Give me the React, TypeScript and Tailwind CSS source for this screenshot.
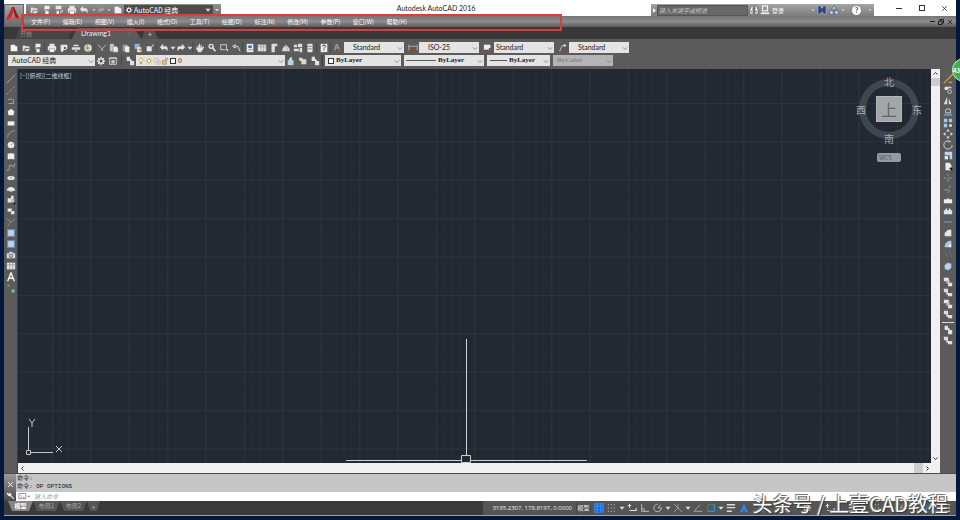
import type { ReactNode } from "react";
import clsx from "clsx";

// 12x12 のツールアイコン
const glyphs: Record<string, ReactNode> = {
  new: <path d="M2 2h5l1 2h2v6H2z" fill="#f2f2f2" />,
  open: <path d="M2 3h3l1 1h4v2H5L3 10H2zM6 7h5l-2 3H4z" fill="#dcdcdc" />,
  save: <path d="M3 1h6v4H3zM4 7h4v4H4zM3 5h1v2H3z" fill="#e8eef2" />,
  saveAs: <path d="M2 1h7v4H2zM3 7h3v4H3zM7 9l3-3 1 1-3 3z" fill="#e8e4dc" />,
  print: (
    <>
      <path d="M3 1h6v3H3zM1 4h10v5H1z" fill="#e6e6e6" />
      <path d="M3 7h6v4H3z" fill="#fff" stroke="#666" strokeWidth=".6" />
    </>
  ),
  preview: (
    <>
      <path d="M2 2h8v5H7l-3 4-2-1z" fill="#e6e6e6" />
      <circle cx="7" cy="6" r="2" fill="#555" stroke="#fff" />
    </>
  ),
  publish: <path d="M3 2h6v2H3zM1 5h10v3H1zM4 9h4l-2 2z" fill="#e0e0e0" />,
  globe: (
    <>
      <circle cx="6" cy="6" r="4.5" fill="#d8dcc8" />
      <path d="M6 2c-2 3-1 6 1 8M3 6h5" stroke="#6e7f52" fill="none" />
    </>
  ),
  cut: <path d="M1 2l5 5M11 2L6 7M5 9l1-2 1 2" stroke="#c8c8c8" fill="none" />,
  copy: (
    <>
      <path d="M1 1h5v9H1z" fill="#c4c4c4" />
      <path d="M5 4h4l2 2v5H5z" fill="#ececec" stroke="#666" strokeWidth=".5" />
    </>
  ),
  paste: (
    <>
      <path d="M2 2h6v8H2z" fill="#9c9c9c" />
      <path d="M5 4h4l1 1v6H5z" fill="#f0f0f0" />
    </>
  ),
  match: (
    <>
      <path d="M2 1h6v6H2z" fill="#8fb4dc" />
      <path d="M5 5h5v6H5z" fill="#f0e8d8" />
      <path d="M7 7l4 3" stroke="#c98a3a" strokeWidth="2" />
    </>
  ),
  blockEdit: (
    <>
      <path d="M2 4h6v6H2z" fill="#e8e8e8" />
      <path d="M6 7l4-6 1 2z" fill="#e0b070" />
    </>
  ),
  undo: <path d="M1 5l4-4v3h3c2 0 3 2 2 6-1-2-2-3-5-3v2z" fill="#e2e2e2" />,
  redo: <path d="M11 5L7 1v3H4c-2 0-3 2-2 6 1-2 2-3 5-3v2z" fill="#e2e2e2" />,
  arrow: <path d="M3 4.500h6L6 8z" fill="#e0e0e0" />,
  hand: <path d="M3 6V3h1v3l1-5h1v5l1-4h1v4l2-2 1 1-3 5-1 1H4L1 6l1-1z" fill="#e2e2e2" />,
  zoom: (
    <>
      <circle cx="5" cy="4" r="2.500" fill="#666" stroke="#e6e6e6" strokeWidth="1.500" />
      <path d="M7 6l3 4" stroke="#e6e6e6" strokeWidth="2" />
    </>
  ),
  zoomWin: (
    <>
      <path d="M2 2h7v6H2z" fill="none" stroke="#ddd" />
      <path d="M7 7h4v4z" fill="#fff" stroke="#222" strokeWidth=".5" />
    </>
  ),
  zoomPrev: <path d="M2 4l3-2v4zM5 4h3l3 6" stroke="#ddd" strokeWidth="1.200" fill="none" />,
  props: (
    <>
      <path d="M2 1h8v10H2z" fill="#e6ecf2" />
      <path d="M4 3h4v3H4z" fill="#326aa6" />
      <path d="M4 8h5" stroke="#777" />
    </>
  ),
  table: (
    <>
      <path d="M1 2h10v8H1z" fill="#e2e2e2" />
      <path d="M1 4.500h10M4.500 2v8M8 2v8" stroke="#888" strokeWidth=".7" />
    </>
  ),
  palette: <path d="M3 1h7v3H7v7H3z" fill="#dcdcdc" />,
  sheet: <path d="M2 6l4-4 4 4 1 4H1zM5 3l3 5" fill="#dedede" stroke="#777" strokeWidth=".7" />,
  markup: <path d="M1 2h4v3H1zM6 1h5v4H6zM1 7h6v3H1zM8 6h3v5H8z" fill="#dedede" />,
  calc: (
    <>
      <path d="M3 1h6v10H3z" fill="#e8e8e8" />
      <path d="M4 4h4M4 7h4" stroke="#666" />
    </>
  ),
  help: (
    <>
      <path d="M2 1h8v10H2z" fill="#ededed" />
      <path d="M4 4c0-2 4-2 4 0 0 1-2 1-2 3M6 8v1" stroke="#333" fill="none" strokeWidth="1.200" />
    </>
  ),
  textStyle: (
    <>
      <path d="M2 9l2-7h1l3 7M3 6h4" stroke="#a8a8a8" fill="none" strokeWidth="1.300" />
      <path d="M7 6h2v5H7z" fill="#9a5a38" />
    </>
  ),
  dimStyle: (
    <>
      <path d="M1 2v7M11 2v7M1 4h10" stroke="#bbb" />
      <path d="M3 5h6v4H3z" fill="#8a4a30" />
    </>
  ),
  tableStyle: (
    <>
      <path d="M1 2h8v6H1z" fill="#ececec" />
      <path d="M7 6h3v5H7z" fill="#8a5238" />
    </>
  ),
  leaderStyle: (
    <>
      <path d="M2 10L5 3h3" stroke="#ccc" fill="none" />
      <circle cx="8" cy="3" r="1.500" fill="#ddd" />
      <path d="M6 6h4v5H6z" fill="#7d4d3a" />
    </>
  ),
  gear: (
    <>
      <path d="M6 1v10M1 6h10M2.500 2.500l7 7M9.500 2.500l-7 7" stroke="#eee" strokeWidth="1.500" />
      <circle cx="6" cy="6" r="2.600" fill="#444" stroke="#eee" strokeWidth="1.600" />
    </>
  ),
  workspace: (
    <>
      <path d="M2 2h8v8H2z" fill="none" stroke="#ddd" />
      <path d="M4 5h4v4H4z" fill="#ccc" />
      <path d="M1 3h10" stroke="#ccc" />
    </>
  ),
  layers: <path d="M2 1h4v5H2zM5 4h3v2H5zM6 6h5v5H6z" fill="#e0e4e8" />,
  layerPrev: (
    <>
      <path d="M2 5h7v6H2z" fill="#b8d2e8" />
      <path d="M4 5V3l3-2v4" fill="#eee" />
    </>
  ),
  layerState: <path d="M1 2h4l1 2h4v6H4V6H2z" fill="#e0d8cc" />,
  bulb: (
    <>
      <circle cx="6" cy="4.500" r="3" fill="#fff4a8" stroke="#c0a030" />
      <path d="M5 8h2v3H5z" fill="#7a7a6a" />
    </>
  ),
  sun: (
    <>
      <path d="M6 0v12M0 6h12M2 2l8 8M10 2l-8 8" stroke="#c9a94a" strokeWidth=".8" />
      <circle cx="6" cy="6" r="2.500" fill="#fffbe0" stroke="#b89a44" />
    </>
  ),
  vpFreeze: <path d="M2 2h6v6H2zM6 6h5v5H6z" fill="#ddd" stroke="#bbb" />,
  lock: (
    <>
      <path d="M2 5h6v6H2z" fill="#d9c27a" stroke="#8f7a3a" strokeWidth=".7" />
      <path d="M7 5V2h3v3" fill="none" stroke="#777" />
    </>
  ),
  line: <path d="M1 11L11 1" stroke="#b0b0b0" />,
  xline: <path d="M1 11L11 1" stroke="#a8a8a8" strokeDasharray="3 2" />,
  pline: <path d="M3 9h6V5a2 2 0 0 0-3-1H2" fill="none" stroke="#9fb4c4" />,
  polygon: <path d="M6 2l4 3-1 5H3L2 5z" fill="#eef1f3" />,
  rect: <path d="M2 4h8v5H2z" fill="#eef1f3" />,
  arc: <path d="M2 10c0-4 3-7 8-8" fill="none" stroke="#aaa" />,
  circle: (
    <>
      <circle cx="6" cy="6" r="4" fill="#e6eaec" />
      <path d="M6 6l2-2" stroke="#888" />
    </>
  ),
  cloud: <path d="M2 3h3l1-1 1 1h3v7H7l-1-1-1 1H2z" fill="#eef1f3" />,
  spline: <path d="M1 10c4 1 3-3 3-5s3-1 4 0 0 3 3-3" fill="none" stroke="#bcc6cc" />,
  ellipse: (
    <>
      <ellipse cx="6" cy="6" rx="4.500" ry="2.500" fill="#dfe9f1" />
      <circle cx="6" cy="6" r="1" fill="#5b8fb9" />
    </>
  ),
  ellipseArc: <path d="M1 8c0-6 10-6 10 0H8v1H4V8z" fill="#e3eaef" />,
  insert: (
    <>
      <path d="M2 4h4v5H2zM6 1h3v4H6z" fill="#dfe8ee" />
      <path d="M6 5h4v4H6z" fill="#a8c4d8" />
      <path d="M11 8v3H8z" fill="#111" />
    </>
  ),
  block: <path d="M2 3h5v4H2zM6 6h4v4H6z" fill="#eef1f3" stroke="#888" strokeWidth=".4" />,
  point: <path d="M1 2l5 4 5-4M6 6l-4 5" stroke="#9a9a9a" fill="none" />,
  hatch: (
    <>
      <path d="M2 2h8v8H2z" fill="#b9d2f0" />
      <path d="M1 2h10M1 10h10M2 1v10M10 1v10" stroke="#6f93bd" strokeWidth=".8" />
    </>
  ),
  region: (
    <>
      <path d="M1 4h10v6H1zM4 2h4v2H4z" fill="#cfdfee" />
      <circle cx="6" cy="7" r="2" fill="none" stroke="#446" />
    </>
  ),
  mtext: <path d="M2 11L6 1l4 10M3.500 7.500h5" stroke="#f4f4f4" strokeWidth="1.700" fill="none" />,
  addSel: (
    <>
      <path d="M2 2l3 3M7 8h3v3H7z" stroke="#58a858" fill="#9fc4dd" />
      <circle cx="3" cy="3" r="1.300" fill="#57b657" />
    </>
  ),
  erase: (
    <>
      <path d="M1 11L12 0" stroke="#e09a3c" strokeWidth="1.500" />
      <path d="M7 10h4" stroke="#ccc" />
    </>
  ),
  copyObj: (
    <>
      <circle cx="4" cy="4" r="2.200" fill="#e2e8ec" />
      <circle cx="8" cy="8" r="2.200" fill="none" stroke="#cdd9e2" />
      <path d="M6 2h4v2H6z" fill="#cfd8de" />
    </>
  ),
  mirror: <path d="M5 1v9H1zM7 3v7h3z" fill="#dfe4e8" />,
  offset: <path d="M1 9.500h10M3 7V5a3 3 0 0 1 6 0v2H3" fill="none" stroke="#9fc1da" strokeWidth="1.300" />,
  array: (
    <>
      <path d="M1 1h4v4H1zM7 1h4v4H7zM1 7h4v4H1z" fill="#a5c8ea" />
      <path d="M7 7h4v4H7z" fill="#dbe9f6" stroke="#111" strokeWidth=".5" />
    </>
  ),
  move: <path d="M6 0l2 3H4zM6 12l2-3H4zM0 6l3-2v4zM12 6L9 4v4z" fill="#dbe5ec" />,
  rotate: <path d="M9 2a5 5 0 1 0 2 4M9 2H6" fill="none" stroke="#d0d0d0" strokeWidth="1.200" />,
  scale: (
    <>
      <path d="M2 1h9v9H8V5H2z" fill="#b9d4ef" />
      <path d="M2 6h4v4H2z" fill="#f0f0f0" />
    </>
  ),
  stretch: (
    <>
      <path d="M3 1h5l2 3v6H3z" fill="#e8edf1" />
      <path d="M7 7h4v4z" fill="#111" />
    </>
  ),
  trim: <path d="M1 6h3M6 6h5M6 1v3M6 7v4" stroke="#7ea3bd" />,
  extend: <path d="M1 7h6M8 2v3M8 7L6 11" stroke="#8daabf" />,
  breakPt: <path d="M1 5h4l1-2 1 2h4v5H1z" fill="#eceff1" />,
  breakObj: <path d="M1 5h2V3h2v2h2V3h2v2h2v5H1z" fill="#d7e7f4" />,
  join: <path d="M1 6h10" stroke="#6fa4cc" strokeWidth="1.200" />,
  chamfer: <path d="M2 10V6l4-4h4v8z" fill="#e0e6ea" />,
  fillet: (
    <>
      <path d="M2 10c0-5 3-8 8-8v3C8 6 7 8 7 10z" fill="#a8cbe8" />
      <path d="M7 10c0-3 1-4 3-5v5z" fill="#fff" />
    </>
  ),
  blend: <path d="M2 3c4 0 1 5 4 5M7 2c3 1 2 5 4 7" stroke="#5a7d94" fill="none" />,
  explode: <path d="M2 5l3-3 5 1v5l-3 3-5-1z" fill="#b7d3ea" stroke="#678" strokeWidth=".5" />,
  orderA: (
    <>
      <path d="M1 1h6v4H1zM6 7h5v4H6z" fill="#e6e6e6" />
      <path d="M4 4h4v4H4z" fill="#bdbdbd" />
    </>
  ),
  orderB: <path d="M1 1h5v4H1zM6 6h5v4H6zM4 5h2v3H4z" fill="#dedede" />,
  snapGrid: <path d="M1 1h10v10H1zM1 4h10M1 8h10M4 1v10M8 1v10" fill="#1f5fc0" stroke="#2f8cff" strokeWidth="1.300" />,
  dots: <path d="M1 2h10M1 6h10M1 10h10" stroke="#aaa" strokeDasharray="1.500 2" strokeWidth="1.300" />,
  infer: <path d="M3 1v5M1 3h4M3 9h8V6" stroke="#e0e0e0" fill="none" strokeWidth="1.300" />,
  ortho: <path d="M2 1v9h9M5 10V7H2" stroke="#c8c8c8" fill="none" />,
  polar: <path d="M10 6a4.500 4.500 0 1 1-4-4.500M6 6h5M6 6l3-4" stroke="#c8c8c8" fill="none" />,
  iso: <path d="M1 1l10 10M6 1v5M1 11l5-5" stroke="#a8a8a8" fill="none" />,
  track: <path d="M1 10h10M2 9l7-7" stroke="#b8b8b8" fill="none" />,
  osnap: (
    <>
      <path d="M2 2h8v8H2z" stroke="#3f8f6a" fill="none" />
      <path d="M10 1v8M2 10h8" stroke="#2c8ee8" fill="none" strokeWidth="1.400" />
    </>
  ),
  weight: <path d="M1 2h10M1 5.500h10M1 10h6" stroke="#dcdcdc" strokeWidth="1.700" />,
  annot: <path d="M6 0l2 6 3 5H8L6 8l-2 3H1l3-5z" fill="#2d8bf0" />,
  burger: <path d="M1 2h10M1 6h10M1 10h10" stroke="#ddd" strokeWidth="1.300" />,
  binocular: (
    <>
      <path d="M1 11V6l2-5h2v10zM7 11V1h2l2 5v5zM5 4h2v3H5z" fill="#f2f2f2" stroke="#444" strokeWidth=".7" />
      <path d="M2 8h2M8 8h2" stroke="#444" />
    </>
  ),
  user: (
    <>
      <path d="M3 1h6v6H3z" fill="none" stroke="#f2f2f2" strokeWidth="1.500" />
      <path d="M1 10h10" stroke="#f2f2f2" strokeWidth="2" />
    </>
  ),
  exchange: <path d="M1 1h3l2 3 2-3h3v10H8L6 8l-2 3H1z" fill="#33467e" stroke="#eee" strokeWidth=".5" />,
  a360: <path d="M6 1l3 4H3zM1 7h4v4H1zM7 7h4v4H7z" fill="#dde4f6" stroke="#3a4b80" strokeWidth=".8" />,
  wrench: <path d="M2 2l2 2 1-2 2 2v2l4 4-1 1-4-4H4L1 4z" fill="#f4f4f4" />,
  close: <path d="M2 2l8 8M10 2l-8 8" stroke="currentColor" strokeWidth="1.500" />,
};

function Icon({ name, className }: { name: string; className?: string }) {
  return (
    <svg viewBox="0 0 12 12" className={clsx("shrink-0", className ?? "size-[10px]")}>
      {glyphs[name]}
    </svg>
  );
}

function ToolButton({ name, className }: { name: string; className?: string }) {
  return (
    <button aria-label={name} className={clsx("flex shrink-0 items-center justify-center", className ?? "h-[11px] w-3")}>
      <Icon name={name} />
    </button>
  );
}

interface ComboProps {
  label: string;
  value: string;
  className: string;
  selectClass?: string;
  disabled?: boolean;
  children?: ReactNode;
}

function Combo({ label, value, className, selectClass, disabled, children }: ComboProps) {
  return (
    <label
      className={clsx(
        "flex h-[11px] shrink-0 items-center",
        disabled ? "bg-[#b4b4b4] text-[#858585]" : "bg-[#e4e4e4] text-[#222]",
        className,
      )}
    >
      {children}
      <select
        aria-label={label}
        disabled={disabled}
        className={clsx("h-full min-w-0 flex-1 appearance-none leading-[11px] opacity-100 outline-none", selectClass)}
      >
        <option>{value}</option>
      </select>
      <svg viewBox="0 0 8 8" className="mr-px size-[6px] shrink-0">
        <path d="M1 3l3 3 3-3" fill="none" stroke="#777" />
      </svg>
    </label>
  );
}

const menus = [
  "文件(F)", "编辑(E)", "视图(V)", "插入(I)", "格式(O)", "工具(T)",
  "绘图(D)", "标注(N)", "修改(M)", "参数(P)", "窗口(W)", "帮助(H)",
];

const quickTools = ["open", "save", "saveAs", "print", "undo"];

const standardGroups = [
  ["new", "open", "save"],
  ["print", "preview", "publish", "globe"],
  ["cut", "copy", "paste", "match", "blockEdit"],
  ["undo", "arrow", "redo", "arrow"],
  ["hand", "zoom", "zoomWin", "zoomPrev"],
  ["props", "table", "palette", "sheet", "markup", "calc"],
  ["help"],
];

const styleCombos = [
  { icon: "textStyle", label: "文字样式", value: "Standard", indent: "pl-[9px]" },
  { icon: "dimStyle", label: "标注样式", value: "ISO-25", indent: "pl-[9px]" },
  { icon: "tableStyle", label: "表格样式", value: "Standard", indent: "pl-[2px]" },
  { icon: "leaderStyle", label: "多重引线样式", value: "Standard", indent: "pl-[9px]" },
];

const drawTools = [
  "line", "xline", "pline", "polygon", "rect", "arc", "circle", "cloud", "spline", "ellipse",
  "ellipseArc", "insert", "block", "point", "hatch", "hatch", "region", "table", "mtext", "addSel",
];

const modifyTools = [
  "erase", "copyObj", "mirror", "offset", "array", "move", "rotate", "scale", "stretch",
  "trim", "extend", "breakPt", "breakObj", "join", "chamfer", "fillet", "blend", "explode",
];

const statusTools = [
  "snapGrid", "dots", "arrow", "infer", "ortho", "polar", "arrow", "iso", "arrow", "track", "osnap", "arrow",
  "weight", "annot",
];

function TitleBar() {
  return (
    <div className="flex h-4 items-end bg-white">
      <div className="ml-[2px] flex h-3 w-[195px] shrink-0 items-center bg-linear-to-b from-[#909090] to-[#6c6c6c]">
        <div className="flex w-[98px] items-center justify-between pl-[2px]">
          {quickTools.map((name) => (
            <ToolButton key={name} name={name} />
          ))}
          <Icon name="arrow" className="size-[6px]" />
          <Icon name="redo" className="size-2 opacity-40" />
          <Icon name="arrow" className="size-[6px]" />
          <ToolButton name="new" />
        </div>
        <label className="flex h-[11px] flex-1 items-center bg-[#4c4c4c] pl-px text-white">
          <Icon name="gear" className="size-2" />
          <select aria-label="工作空间" className="h-full min-w-0 flex-1 appearance-none pl-px leading-[11px]">
            <option>AutoCAD 经典</option>
          </select>
          <Icon name="arrow" />
        </label>
        <button aria-label="自定义" className="flex w-2 justify-center">
          <Icon name="arrow" className="size-2" />
        </button>
      </div>
      <h1 className="flex h-4 flex-1 items-center justify-center font-['Lato','Noto_Sans_CJK_SC',sans-serif] text-[7px] text-[#222]">
        Autodesk AutoCAD 2016
      </h1>
      <div className="flex h-3 w-[223px] shrink-0 items-center bg-linear-to-b from-[#a4a4a4] to-[#7c7c7c]">
        <span className="flex w-[6px] justify-center">
          <svg viewBox="0 0 4 6" className="h-[5px] w-[3px]">
            <path d="M0 0l4 3-4 3z" fill="#fff" />
          </svg>
        </span>
        <input
          aria-label="搜索"
          placeholder="键入关键字或短语"
          className="h-[11px] w-[91px] border border-[#555] bg-[#686868] px-px text-[6px] leading-[9px] italic placeholder:text-[#c4c4c4]"
        />
        <ToolButton name="binocular" />
        <button className="flex items-center gap-[2px] text-[6px] text-white">
          <Icon name="user" />
          登录
        </button>
        <span className="flex-1" />
        <Icon name="arrow" className="size-[6px]" />
        <ToolButton name="exchange" />
        <ToolButton name="a360" />
        <Icon name="arrow" className="size-[6px]" />
        <button className="mx-[6px] flex size-[9px] items-center justify-center rounded-full bg-white text-[7px] leading-none font-bold text-[#2c4e96]">
          ?
        </button>
        <Icon name="arrow" className="mr-px size-[6px]" />
      </div>
      <div className="flex h-4 w-[82px] shrink-0 items-center justify-between pr-2 pl-[22px]">
        <button aria-label="最小化" className="flex">
          <svg viewBox="0 0 6 6" className="size-[6px]">
            <path d="M0 3.500h6" stroke="#333" />
          </svg>
        </button>
        <button aria-label="最大化" className="size-[6px] border border-[#333]" />
        <button aria-label="关闭" className="text-[#333]">
          <Icon name="close" className="size-[7px]" />
        </button>
      </div>
    </div>
  );
}

function MenuBar() {
  return (
    <nav className="flex h-[11px] items-center justify-between bg-linear-to-b from-[#757575] via-[#8c8c8c] to-[#5c5c5c] pl-[7px] text-[6px] text-white">
      <div className="flex w-[376px] shrink-0 justify-between">
        {menus.map((menu) => (
          <button key={menu} className="leading-[11px] whitespace-nowrap">
            {menu}
          </button>
        ))}
      </div>
      <div className="flex items-center gap-[3px] pr-[3px] text-[#1c1c1c]">
        <button aria-label="最小化图形" className="h-px w-[5px] bg-[#1c1c1c]" />
        <button aria-label="还原图形" className="flex">
          <svg viewBox="0 0 6 6" className="size-[6px]">
            <path d="M2 2V.5h3.500V4H4M.5 2H4v3.500H.5z" fill="none" stroke="#1c1c1c" />
          </svg>
        </button>
        <button aria-label="关闭图形">
          <Icon name="close" className="size-[6px]" />
        </button>
      </div>
    </nav>
  );
}

function FileTabs() {
  return (
    <div className="flex h-3 items-end bg-[#383838] pl-[11px] text-[7px]">
      <button className="h-[11px] w-[57px] bg-[#464646] pl-[5px] text-left text-[6px] leading-[11px] text-[#8c8c8c] [clip-path:polygon(4px_0,100%_0,94%_100%,0_100%)]">
        开始
      </button>
      <button className="flex h-[11px] w-[69px] items-center justify-between bg-[#5a5a5a] pr-[9px] pl-[9px] font-['Lato',sans-serif] text-[#f0f0f0] [clip-path:polygon(5px_0,62px_0,100%_100%,0_100%)]">
        Drawing1
        <Icon name="close" className="size-[5px] text-[#777]" />
      </button>
      <button
        aria-label="新图形"
        className="ml-px flex h-[10px] w-4 items-center justify-center bg-[#525252] text-[8px] leading-none text-[#ccc] [clip-path:polygon(3px_0,12px_0,100%_100%,0_100%)]"
      >
        +
      </button>
    </div>
  );
}

function Toolbars() {
  return (
    <div className="bg-[#5b5b5b] pt-[3px] pb-[3px] text-[7px] text-[#222]">
      <div className="flex h-[11px] items-center pl-1">
        {standardGroups.map((group, i) => (
          <div key={i} className="mr-px flex border-r border-[#4a4a4a] last:border-0">
            {group.map((name, j) => (
              <ToolButton key={j} name={name} className={name === "arrow" ? "h-[11px] w-[5px]" : undefined} />
            ))}
          </div>
        ))}
        {styleCombos.map((combo) => (
          <div key={combo.label} className="mr-[3px] flex shrink-0 font-['Lato','Noto_Sans_CJK_SC',sans-serif]">
            <ToolButton name={combo.icon} />
            <Combo label={combo.label} value={combo.value} className="w-[60px]" selectClass={combo.indent} />
          </div>
        ))}
      </div>
      <div className="mt-[2px] flex items-center pl-1">
        <Combo label="工作空间" value="AutoCAD 经典" className="w-[87px]" selectClass="pl-[4px]" />
        <ToolButton name="gear" />
        <ToolButton name="workspace" />
        <span className="mx-[2px] h-[11px] w-px bg-[#454545]" />
        <ToolButton name="layers" />
        <Combo label="图层" value="0" className="w-[149px]" selectClass="pl-[2px]">
          <div className="flex items-center pl-px">
            <Icon name="bulb" className="size-2" />
            <Icon name="sun" className="size-2" />
            <Icon name="vpFreeze" className="size-2" />
            <Icon name="lock" className="size-2" />
            <span className="ml-px size-[6px] border border-[#333] bg-white" />
          </div>
        </Combo>
        <ToolButton name="layerPrev" />
        <ToolButton name="layerState" />
        <ToolButton name="layers" />
        <div className="flex gap-[3px] border-l-2 border-[#474747] pl-[2px] font-['Liberation_Serif','Noto_Sans_CJK_SC',serif] font-bold">
          <Combo label="颜色" value="ByLayer" className="w-[76px]" selectClass="pl-[2px]">
            <span className="ml-[3px] size-[6px] border border-[#333] bg-white" />
          </Combo>
          <Combo label="线型" value="ByLayer" className="w-20" selectClass="pl-[2px]">
            <span className="ml-[2px] h-px w-[30px] bg-[#555]" />
          </Combo>
          <Combo label="线宽" value="ByLayer" className="w-[63px]" selectClass="pl-[2px]">
            <span className="ml-[3px] h-px w-[17px] bg-[#555]" />
          </Combo>
          <Combo label="打印样式" value="ByColor" className="w-[60px]" selectClass="pl-[4px]" disabled />
        </div>
      </div>
    </div>
  );
}

function ViewCube() {
  return (
    <div className="absolute top-[6px] right-[8px] h-[90px] w-[68px] text-[10px] leading-none text-[#a9adb2]">
      <div className="absolute top-[4px] left-[4px] size-[60px] rounded-full border-[7px] border-[#3e4650]" />
      <button className="absolute top-[21px] left-[21px] flex size-[26px] items-center justify-center border border-[#b4b6b8] bg-[#a3a6a9] text-[16px] leading-none text-[#61676d]">
        上
      </button>
      <span className="absolute top-[2px] left-[29px]">北</span>
      <span className="absolute top-[59px] left-[29px]">南</span>
      <span className="absolute top-[30px] left-px">西</span>
      <span className="absolute top-[30px] right-px">东</span>
      <button className="absolute top-[78px] left-[22px] h-[9px] w-6 rounded-[2px] bg-[#9699a1] pl-[2px] text-left text-[6px] leading-[9px] text-[#50545e]">
        WCS
      </button>
    </div>
  );
}

function DrawingArea() {
  return (
    <main className="relative min-w-0 flex-1 overflow-hidden bg-[#212831]">
      <svg className="absolute inset-0 size-full">
        <defs>
          <pattern id="minor" width="7.68" height="7.68" x="34" y="34" patternUnits="userSpaceOnUse">
            <path d="M.5 0v7.680M0 .5h7.680" stroke="#242c35" fill="none" />
          </pattern>
          <pattern id="major" width="38.4" height="38.4" x="34" y="34" patternUnits="userSpaceOnUse">
            <path d="M.5 0v38.400M0 .5h38.400" stroke="#2b333d" fill="none" />
          </pattern>
        </defs>
        <rect width="100%" height="100%" fill="url(#minor)" />
        <rect width="100%" height="100%" fill="url(#major)" />
      </svg>
      <span className="absolute top-[2px] left-[2px] text-[6px] leading-[10px] text-[#c8ccd0]">[−][俯视][二维线框]</span>
      <ViewCube />
      {/* UCS 图标 */}
      <svg viewBox="0 0 46 42" className="absolute bottom-[3px] left-[5px] h-[42px] w-[46px]" fill="none" stroke="#c4c8cc">
        <path d="M5.500 9v24M7.500 34.500H30M3.500 32.500h4v4h-4z" />
        <path d="M6 1l3 4 3-4M9 5v4M33 28l6 6M39 28l-6 6" />
      </svg>
      {/* 十字光标 */}
      <svg viewBox="0 0 242 124" className="absolute bottom-0 left-[328px] h-[124px] w-[242px]" fill="none" stroke="#cdd0d3">
        <path d="M120.500 0v116M0 121.500h115M125 121.500h116M115.500 116.500h9v7h-9z" />
      </svg>
    </main>
  );
}

function CommandPanel() {
  return (
    <section className="flex h-[28px] border-t border-[#4a4a4a] text-[7px]">
      <div className="flex w-3 shrink-0 flex-col items-center justify-end gap-[3px] bg-linear-to-b from-[#9a9a9a] to-[#4a4a4a] pb-px text-white">
        <button aria-label="关闭命令行">
          <Icon name="close" className="size-[7px]" />
        </button>
        <button aria-label="自定义命令行">
          <Icon name="wrench" className="size-[9px]" />
        </button>
      </div>
      <div className="flex min-w-0 flex-1 flex-col bg-white">
        <div className="h-[18px] bg-[#c6c6c6] pt-px pl-px font-['Liberation_Mono','Noto_Sans_CJK_SC',monospace] text-[6px] leading-[8px] text-[#222]">
          <p>命令:</p>
          <p>命令: OP OPTIONS</p>
        </div>
        <label className="flex flex-1 items-center pl-[2px] text-[#888]">
          <svg viewBox="0 0 14 8" className="mr-[3px] h-[7px] w-[13px]" fill="none" stroke="#888">
            <path d="M.5.5h8v6h-8zM2 2l2 2-2 2M5 5h2" />
            <path d="M10 3h4l-2 2z" fill="#888" stroke="none" />
          </svg>
          <input aria-label="命令" placeholder="键入命令" className="h-[9px] flex-1 text-[6px] leading-[9px] italic outline-none placeholder:text-[#999]" />
        </label>
      </div>
    </section>
  );
}

function StatusBar() {
  return (
    <footer className="flex h-[14px] items-start bg-[#3a3a3a] text-[6px] text-[#aaa]">
      <div className="flex flex-1 pl-1">
        <button className="h-[10px] w-[25px] bg-[#858585] leading-[10px] font-bold text-white [clip-path:polygon(0_0,100%_0,21px_100%,4px_100%)]">
          模型
        </button>
        {["布局1", "布局2"].map((name) => (
          <button
            key={name}
            className="h-[10px] w-[27px] bg-[#565656] leading-[10px] [clip-path:polygon(0_0,100%_0,23px_100%,4px_100%)]"
          >
            {name}
          </button>
        ))}
        <button aria-label="新建布局" className="h-[10px] w-[13px] bg-[#565656] text-[8px] leading-[9px] [clip-path:polygon(0_0,100%_0,10px_100%,3px_100%)]">
          +
        </button>
      </div>
      <div className="flex h-full w-[473px] shrink-0 items-center bg-[#555] text-[#f0f0f0]">
        <span className="w-[92px] pr-[3px] text-right font-['Open_Sans',sans-serif] whitespace-nowrap">
          3195.2307, 178.8197, 0.0000
        </span>
        <button className="mx-px w-[15px] border-x border-[#474747] text-center leading-[12px]">模型</button>
        {statusTools.map((name, i) => (
          <ToolButton key={i} name={name} className={name === "arrow" ? "h-3 w-[7px]" : "h-3 w-[13px]"} />
        ))}
        <div className="flex flex-1 items-center justify-between px-1">
          {["annot", "iso", "gear", "infer", "weight", "dots", "polar", "osnap", "burger"].map((name) => (
            <ToolButton key={name} name={name} />
          ))}
        </div>
      </div>
    </footer>
  );
}

export default function App() {
  return (
    <div className="relative h-screen overflow-hidden bg-[#03183a] pr-[4px] pb-1 pl-1 font-['Noto_Sans_CJK_SC',sans-serif] text-[7px]">
      <div className="flex h-full flex-col border-b border-[#9aa4b0] bg-[#5b5b5b]">
        <header className="flex shrink-0 bg-white">
          <button
            aria-label="应用程序菜单"
            className="mt-[4px] flex w-5 shrink-0 items-start justify-start border border-[#666] bg-linear-to-b from-[#a8a8a8] to-[#6a6a6a] pt-px"
          >
            <svg viewBox="0 0 16 16" className="size-4">
              <path d="M7 1L1 14l4-1 3-6z" fill="#d0242a" />
              <path d="M7 1h2l6 13-4-1z" fill="#a3161b" />
              <path d="M5 11l9 1 1 2-5-1-6 1z" fill="#e3484b" />
            </svg>
          </button>
          <div className="min-w-0 flex-1">
            <TitleBar />
            <MenuBar />
          </div>
        </header>
        <FileTabs />
        <Toolbars />
        <div className="flex min-h-0 flex-1">
          <aside className="flex w-[14px] shrink-0 flex-col items-center border-r border-[#3c3c3c] pt-[4px]">
            {drawTools.map((name, i) => (
              <ToolButton key={i} name={name} />
            ))}
          </aside>
          <div className="flex min-w-0 flex-1 flex-col">
            <div className="flex min-h-0 flex-1">
              <DrawingArea />
              <div className="flex w-[9px] shrink-0 flex-col items-center bg-[#f0f0f0]">
                <svg viewBox="0 0 9 9" className="size-[9px]" fill="none" stroke="#333">
                  <path d="M2.500 5.500l2-2 2 2" />
                </svg>
                <div className="h-2 w-full bg-[#cdcdcd]" />
                <svg viewBox="0 0 9 9" className="mt-auto size-[9px]" fill="none" stroke="#333">
                  <path d="M2.500 3.500l2 2 2-2" />
                </svg>
              </div>
            </div>
            <div className="flex h-[10px] items-center bg-[#f0f0f0] pr-2">
              <svg viewBox="0 0 9 9" className="size-[9px]" fill="none" stroke="#333">
                <path d="M5.500 2.500l-2 2 2 2" />
              </svg>
              <div className="ml-auto h-full w-[9px] bg-[#cdcdcd]" />
              <svg viewBox="0 0 9 9" className="size-[9px]" fill="none" stroke="#333">
                <path d="M3.500 2.500l2 2-2 2" />
              </svg>
            </div>
          </div>
          <aside className="flex w-4 shrink-0 flex-col items-center pt-[4px]">
            {modifyTools.map((name) => (
              <ToolButton key={name} name={name} />
            ))}
            <div className="mt-[5px] flex flex-col border-b border-[#ddd] pb-[2px]">
              {["orderA", "orderB", "orderA", "orderB"].map((name, i) => (
                <ToolButton key={i} name={name} />
              ))}
            </div>
            <div className="mt-px">
              <ToolButton name="layers" />
              <ToolButton name="orderB" />
            </div>
          </aside>
        </div>
        <CommandPanel />
        <StatusBar />
      </div>

      {/* 菜单栏标记框 */}
      <div className="absolute top-[14px] left-[21px] h-[17px] w-[541px] border-2 border-[#dc3c40]" />
      <div className="absolute top-[58px] -right-4 flex size-6 items-center rounded-full border border-[#d8f0d8] bg-[#3fae4c] text-[6px] font-bold text-white">
        43
      </div>
      <p className="absolute right-3 bottom-[2px] text-[20px] leading-[28px] whitespace-nowrap text-white [text-shadow:1px_1px_1px_#333,-1px_-1px_0_#777]">
        头条号 / 上壹CAD教程
      </p>
    </div>
  );
}
